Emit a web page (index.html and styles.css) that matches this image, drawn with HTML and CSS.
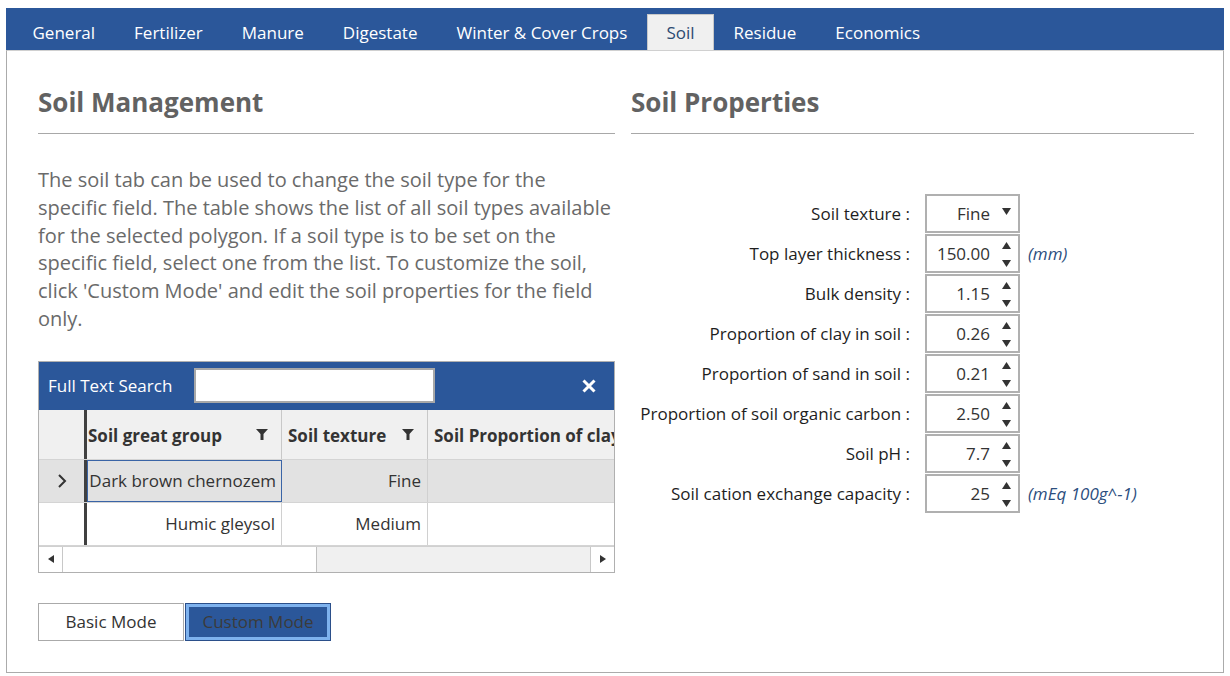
FILE: index.html
```html
<!DOCTYPE html>
<html>
<head>
<meta charset="utf-8">
<link rel="stylesheet" href="styles.css">
</head>
<body>
<div class="app">
  <nav class="tabs">
    <div class="tab">General</div>
    <div class="tab">Fertilizer</div>
    <div class="tab">Manure</div>
    <div class="tab">Digestate</div>
    <div class="tab">Winter &amp; Cover Crops</div>
    <div class="tab active">Soil</div>
    <div class="tab">Residue</div>
    <div class="tab">Economics</div>
  </nav>
  <main class="panel">
    <section class="col left">
      <h2 class="heading">Soil Management</h2>
      <p class="intro">The soil tab can be used to change the soil type for the<br>
specific field. The table shows the list of all soil types available<br>
for the selected polygon. If a soil type is to be set on the<br>
specific field, select one from the list. To customize the soil,<br>
click 'Custom Mode' and edit the soil properties for the field<br>
only.</p>
      <div class="grid">
        <div class="search">
          <span class="search-label">Full Text Search</span>
          <div class="search-input"></div>
          <svg class="close" width="16" height="16" viewBox="0 0 16 16"><path d="M2.5 2.5 L13.5 13.5 M13.5 2.5 L2.5 13.5" stroke="#fff" stroke-width="3" stroke-linecap="butt"/></svg>
        </div>
        <div class="table">
          <div class="row head">
            <div class="rh"></div>
            <div class="cell c1"><span>Soil great group</span><svg class="filter" width="12" height="12" viewBox="0 0 12 12"><path d="M0 0 H12 L7.5 5 V11 H4.5 V5 Z" fill="#333"/></svg></div>
            <div class="cell c2"><span>Soil texture</span><svg class="filter" width="12" height="12" viewBox="0 0 12 12"><path d="M0 0 H12 L7.5 5 V11 H4.5 V5 Z" fill="#333"/></svg></div>
            <div class="cell c3"><span>Soil Proportion of clay in soil</span></div>
          </div>
          <div class="row data selected">
            <div class="rh"><svg width="10" height="14" viewBox="0 0 10 14"><path d="M2 1 L8 7 L2 13" fill="none" stroke="#333" stroke-width="2"/></svg></div>
            <div class="cell c1 focus">Dark brown chernozem</div>
            <div class="cell c2">Fine</div>
            <div class="cell c3"></div>
          </div>
          <div class="row data">
            <div class="rh"></div>
            <div class="cell c1">Humic gleysol</div>
            <div class="cell c2">Medium</div>
            <div class="cell c3"></div>
          </div>
        </div>
        <div class="hscroll">
          <div class="sbtn"><svg width="6" height="8" viewBox="0 0 6 8"><path d="M6 0 V8 L0 4 Z" fill="#333"/></svg></div>
          <div class="track"><div class="thumb"></div></div>
          <div class="sbtn right"><svg width="6" height="8" viewBox="0 0 6 8"><path d="M0 0 V8 L6 4 Z" fill="#333"/></svg></div>
        </div>
      </div>
      <div class="modes">
        <button class="mode">Basic Mode</button>
        <button class="mode custom">Custom Mode</button>
      </div>
    </section>
    <section class="col right">
      <h2 class="heading">Soil Properties</h2>
      <div class="form">
        <label class="lbl">Soil texture :</label>
        <div class="box select"><span class="val">Fine</span><span class="dd"><svg width="9" height="7" viewBox="0 0 9 7"><path d="M0 0 H9 L4.5 7 Z" fill="#333"/></svg></span></div>
        <span class="unit"></span>

        <label class="lbl">Top layer thickness :</label>
        <div class="box"><span class="val">150.00</span><span class="spin"><svg width="9" height="7" viewBox="0 0 9 7"><path d="M0 7 H9 L4.5 0 Z" fill="#333"/></svg><svg width="9" height="7" viewBox="0 0 9 7"><path d="M0 0 H9 L4.5 7 Z" fill="#333"/></svg></span></div>
        <span class="unit">(mm)</span>

        <label class="lbl">Bulk density :</label>
        <div class="box"><span class="val">1.15</span><span class="spin"><svg width="9" height="7" viewBox="0 0 9 7"><path d="M0 7 H9 L4.5 0 Z" fill="#333"/></svg><svg width="9" height="7" viewBox="0 0 9 7"><path d="M0 0 H9 L4.5 7 Z" fill="#333"/></svg></span></div>
        <span class="unit"></span>

        <label class="lbl">Proportion of clay in soil :</label>
        <div class="box"><span class="val">0.26</span><span class="spin"><svg width="9" height="7" viewBox="0 0 9 7"><path d="M0 7 H9 L4.5 0 Z" fill="#333"/></svg><svg width="9" height="7" viewBox="0 0 9 7"><path d="M0 0 H9 L4.5 7 Z" fill="#333"/></svg></span></div>
        <span class="unit"></span>

        <label class="lbl">Proportion of sand in soil :</label>
        <div class="box"><span class="val">0.21</span><span class="spin"><svg width="9" height="7" viewBox="0 0 9 7"><path d="M0 7 H9 L4.5 0 Z" fill="#333"/></svg><svg width="9" height="7" viewBox="0 0 9 7"><path d="M0 0 H9 L4.5 7 Z" fill="#333"/></svg></span></div>
        <span class="unit"></span>

        <label class="lbl">Proportion of soil organic carbon :</label>
        <div class="box"><span class="val">2.50</span><span class="spin"><svg width="9" height="7" viewBox="0 0 9 7"><path d="M0 7 H9 L4.5 0 Z" fill="#333"/></svg><svg width="9" height="7" viewBox="0 0 9 7"><path d="M0 0 H9 L4.5 7 Z" fill="#333"/></svg></span></div>
        <span class="unit"></span>

        <label class="lbl">Soil pH :</label>
        <div class="box"><span class="val">7.7</span><span class="spin"><svg width="9" height="7" viewBox="0 0 9 7"><path d="M0 7 H9 L4.5 0 Z" fill="#333"/></svg><svg width="9" height="7" viewBox="0 0 9 7"><path d="M0 0 H9 L4.5 7 Z" fill="#333"/></svg></span></div>
        <span class="unit"></span>

        <label class="lbl">Soil cation exchange capacity :</label>
        <div class="box"><span class="val">25</span><span class="spin"><svg width="9" height="7" viewBox="0 0 9 7"><path d="M0 7 H9 L4.5 0 Z" fill="#333"/></svg><svg width="9" height="7" viewBox="0 0 9 7"><path d="M0 0 H9 L4.5 7 Z" fill="#333"/></svg></span></div>
        <span class="unit">(mEq 100g^-1)</span>
      </div>
    </section>
  </main>
</div>
</body>
</html>
```
FILE: styles.css
```css
* { box-sizing: border-box; }
html, body { margin: 0; padding: 0; background: #fff; }
body {
  font-family: "Open Sans", "Noto Sans", sans-serif;
  color: #222;
}
.app {
  margin: 8px 6px 0 6px;
  width: 1218px;
}
.tabs {
  display: flex;
  align-items: flex-end;
  height: 42px;
  background: #2b579a;
  padding-left: 7px;
}
.tab {
  height: 36px;
  padding: 0 19.5px;
  display: flex;
  align-items: center;
  justify-content: center;
  color: #fff;
  font-size: 17px;
  white-space: nowrap;
}
.tab.active {
  background: #f0f0f0;
  border: 1px solid #c8c8c8;
  border-bottom: 0;
  padding: 0 18.5px;
  color: #2c4a72;
}
.panel {
  height: 623px;
  border: 1px solid #ababab;
  border-top: 1px solid #d0d0d0;
  display: flex;
  padding: 0 29px 0 31px;
  gap: 16px;
}
.col.left { width: 577px; }
.col.right { flex: 1; }
.heading {
  margin: 0;
  padding-top: 35px;
  height: 83px;
  font-size: 26px;
  font-weight: 700;
  color: #626262;
  border-bottom: 1px solid #a8a8a8;
  line-height: 32px;
}
.intro {
  margin: 32px 0 0 0;
  font-size: 20px;
  line-height: 27.8px;
  color: #6a6a6a;
  white-space: nowrap;
}
.grid {
  margin-top: 28px;
  border: 1px solid #b0b0b0;
  width: 577px;
}
.search {
  height: 48px;
  background: #2b579a;
  display: flex;
  align-items: center;
  padding-left: 9px;
}
.search-label {
  color: #fff;
  font-size: 17px;
  width: 146px;
  white-space: nowrap;
}
.search-input {
  width: 241px;
  height: 35px;
  background: #fff;
  border: 2px solid #a8a8a8;
}
.close { margin-left: 146px; }
.table { overflow: hidden; }
.row {
  display: flex;
  border-bottom: 1px solid #d4d4d4;
}
.row.head { height: 50px; background: #f0f0f0; }
.row.data { height: 43px; background: #fff; }
.row.selected { background: #e2e2e2; }
.rh {
  width: 48px;
  flex: none;
  border-right: 3px solid #404040;
  display: flex;
  align-items: center;
  justify-content: center;
}
.cell {
  flex: none;
  display: flex;
  align-items: center;
  justify-content: flex-end;
  padding: 0 6px 0 2px;
  font-size: 17px;
  color: #333;
  border-right: 1px solid #d0d0d0;
  white-space: nowrap;
  overflow: hidden;
}
.row.head .cell {
  justify-content: space-between;
  font-weight: 700;
  color: #333;
  padding: 2px 13px 0 1px;
  border-right-color: #c8c8c8;
}
.row.head .cell.c2 { padding-left: 6px; }
.row.head .cell.c3 { justify-content: flex-start; padding-left: 6px; }
.c1 { width: 195px; }
.c2 { width: 146px; }
.c3 { width: 200px; border-right: 0; }
.cell.focus {
  border: 1px solid #3a64a6;
  padding-right: 5px;
}
.hscroll {
  height: 26px;
  display: flex;
  background: #f0f0f0;
  border-top: 1px solid #d0d0d0;
}
.sbtn {
  width: 24px;
  display: flex;
  align-items: center;
  justify-content: center;
  background: #fff;
  border-right: 1px solid #c8c8c8;
}
.sbtn.right { border-right: 0; border-left: 1px solid #c8c8c8; }
.track { flex: 1; }
.thumb {
  width: 254px;
  height: 100%;
  background: #fff;
  border-right: 1px solid #c0c0c0;
}
.modes {
  margin-top: 30px;
  display: flex;
}
.mode {
  width: 146px;
  height: 38px;
  font-family: inherit;
  font-size: 17px;
  color: #333;
  background: #fff;
  border: 1px solid #aaa;
  padding: 0;
}
.mode.custom {
  margin-left: 1px;
  background: #2b579a;
  color: #3b3b3b;
  border: 1px solid #2b4f8a;
  box-shadow: inset 0 0 0 3px #7eb2ee;
}
.form {
  margin-top: 59px;
  display: grid;
  grid-template-columns: 279px 95px auto;
  column-gap: 15px;
  grid-auto-rows: 40px;
  align-items: center;
}
.lbl {
  text-align: right;
  font-size: 17px;
  color: #1e1e1e;
  white-space: nowrap;
}
.box {
  height: 39px;
  border: 2px solid #b0b0b0;
  background: #fff;
  display: flex;
  align-items: center;
  justify-content: flex-end;
  font-size: 17px;
  color: #333;
}
.val { margin-right: 12px; }
.dd {
  width: 16px;
  display: flex;
  align-items: center;
  margin-top: -3px;
}
.spin {
  width: 16px;
  height: 100%;
  display: flex;
  flex-direction: column;
  justify-content: space-between;
  padding: 6px 0 4px;
}
.unit {
  font-size: 17px;
  font-style: italic;
  color: #2c4e7e;
  margin-left: -7px;
  white-space: nowrap;
}
```
